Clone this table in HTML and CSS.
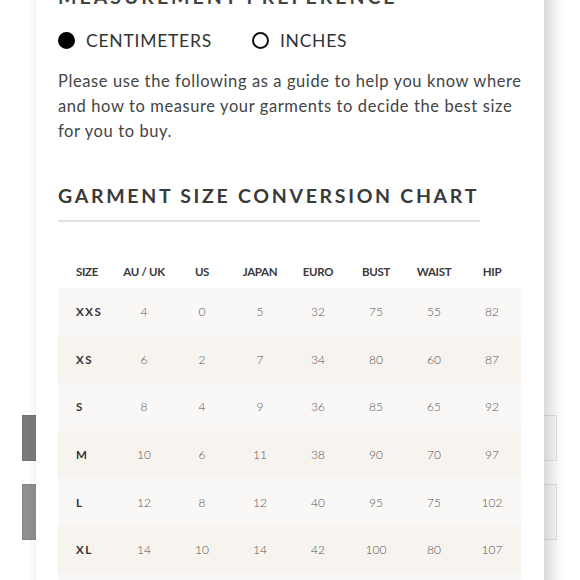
FILE: index.html
```html
<!DOCTYPE html>
<html>
<head>
<meta charset="utf-8">
<link rel="stylesheet" href="styles.css">
</head>
<body>
<div class="page">
  <div class="bg-list">
    <div class="bg-row"><div class="bg-thumb dark"></div><div class="bg-box"></div></div>
    <div class="bg-row tall"><div class="bg-thumb light"></div><div class="bg-box"></div></div>
  </div>

  <div class="modal">
    <h2 class="title cut">MEASUREMENT PREFERENCE</h2>
    <div class="radios">
      <label class="radio"><span class="dot on"></span>CENTIMETERS</label>
      <label class="radio"><span class="dot"></span>INCHES</label>
    </div>
    <p class="guide">Please use the following as a guide to help you know where and how to measure your garments to decide the best size for you to buy.</p>
    <h2 class="title chart-title">GARMENT SIZE CONVERSION CHART</h2>
    <table class="chart">
      <thead>
        <tr><th class="size">SIZE</th><th>AU / UK</th><th>US</th><th>JAPAN</th><th>EURO</th><th>BUST</th><th>WAIST</th><th>HIP</th></tr>
      </thead>
      <tbody>
        <tr><td class="size">XXS</td><td>4</td><td>0</td><td>5</td><td>32</td><td>75</td><td>55</td><td>82</td></tr>
        <tr><td class="size">XS</td><td>6</td><td>2</td><td>7</td><td>34</td><td>80</td><td>60</td><td>87</td></tr>
        <tr><td class="size">S</td><td>8</td><td>4</td><td>9</td><td>36</td><td>85</td><td>65</td><td>92</td></tr>
        <tr><td class="size">M</td><td>10</td><td>6</td><td>11</td><td>38</td><td>90</td><td>70</td><td>97</td></tr>
        <tr><td class="size">L</td><td>12</td><td>8</td><td>12</td><td>40</td><td>95</td><td>75</td><td>102</td></tr>
        <tr><td class="size">XL</td><td>14</td><td>10</td><td>14</td><td>42</td><td>100</td><td>80</td><td>107</td></tr>
        <tr><td class="size">XXL</td><td>16</td><td>12</td><td>16</td><td>44</td><td>105</td><td>85</td><td>112</td></tr>
      </tbody>
    </table>
  </div>
</div>
</body>
</html>
```
FILE: styles.css
```css
html, body {
  margin: 0;
  padding: 0;
  background: #ffffff;
  overflow: hidden;
}
.page {
  position: relative;
  width: 580px;
  height: 580px;
  overflow: hidden;
  font-family: "Lato", "Noto Sans", sans-serif;
}
.bg-list {
  padding-top: 415px;
  display: flex;
  flex-direction: column;
  gap: 23px;
}
.bg-row {
  display: flex;
  justify-content: space-between;
  height: 46px;
  padding-left: 22px;
  padding-right: 23px;
}
.bg-row.tall { height: 56px; }
.bg-thumb {
  width: 40px;
  height: 100%;
  box-sizing: border-box;
  border: 1px solid #707070;
}
.bg-thumb.dark { background: #7b7b7b; }
.bg-thumb.light { background: #8f8f8f; border-color: #858585; }
.bg-box {
  width: 40px;
  height: 100%;
  box-sizing: border-box;
  border: 1px solid #e3e3e3;
  background: #fbfbfb;
}
.modal {
  position: absolute;
  left: 36px;
  top: -15px;
  width: 508px;
  height: 620px;
  background: #ffffff;
  box-sizing: border-box;
  padding-left: 22px;
  box-shadow: 8px 0 14px rgba(0,0,0,0.16), -3px 0 6px rgba(0,0,0,0.04);
}
.title {
  margin: 0;
  font-weight: 700;
  font-size: 19.5px;
  letter-spacing: 2.7px;
  color: #3a3a3a;
  line-height: 24px;
  white-space: nowrap;
}
.title.cut {
  color: #444;
  letter-spacing: 3px;
}
.radios {
  display: flex;
  align-items: center;
  gap: 40px;
  margin-top: 21px;
}
.radio {
  display: flex;
  align-items: center;
  gap: 11px;
  font-size: 17.5px;
  letter-spacing: 0.75px;
  color: #333;
}
.dot {
  width: 17px;
  height: 17px;
  border-radius: 50%;
  box-sizing: border-box;
  border: 2px solid #111;
}
.dot.on { background: #000; border-color: #000; }
.guide {
  margin: 18px 0 0;
  width: 480px;
  font-size: 16.5px;
  line-height: 25px;
  letter-spacing: 0.6px;
  color: #444;
}
.chart-title {
  margin-top: 40px;
  width: 422px;
  padding-bottom: 12px;
  border-bottom: 2px solid #e2e2e2;
}
.chart {
  margin-top: 32px;
  border-collapse: collapse;
  table-layout: fixed;
  width: 463px;
}
.chart th {
  height: 34px;
  padding: 0;
  width: 58px;
  font-size: 11.5px;
  letter-spacing: -0.3px;
  font-weight: 700;
  color: #3a3a3a;
  text-align: center;
  vertical-align: middle;
}
.chart th.size, .chart td.size {
  width: 57px;
  text-align: left;
  padding-left: 18px;
  box-sizing: border-box;
}
.chart td {
  height: 47.6px;
  padding: 0;
  font-size: 12px;
  font-weight: 300;
  color: #555;
  text-align: center;
  vertical-align: middle;
}
.chart td.size {
  font-size: 11.5px;
  font-weight: 700;
  color: #333;
  letter-spacing: 1.6px;
}
.chart tbody tr:nth-child(odd) { background: #faf8f7; }
.chart tbody tr:nth-child(even) { background: #f7f3ee; }
```
